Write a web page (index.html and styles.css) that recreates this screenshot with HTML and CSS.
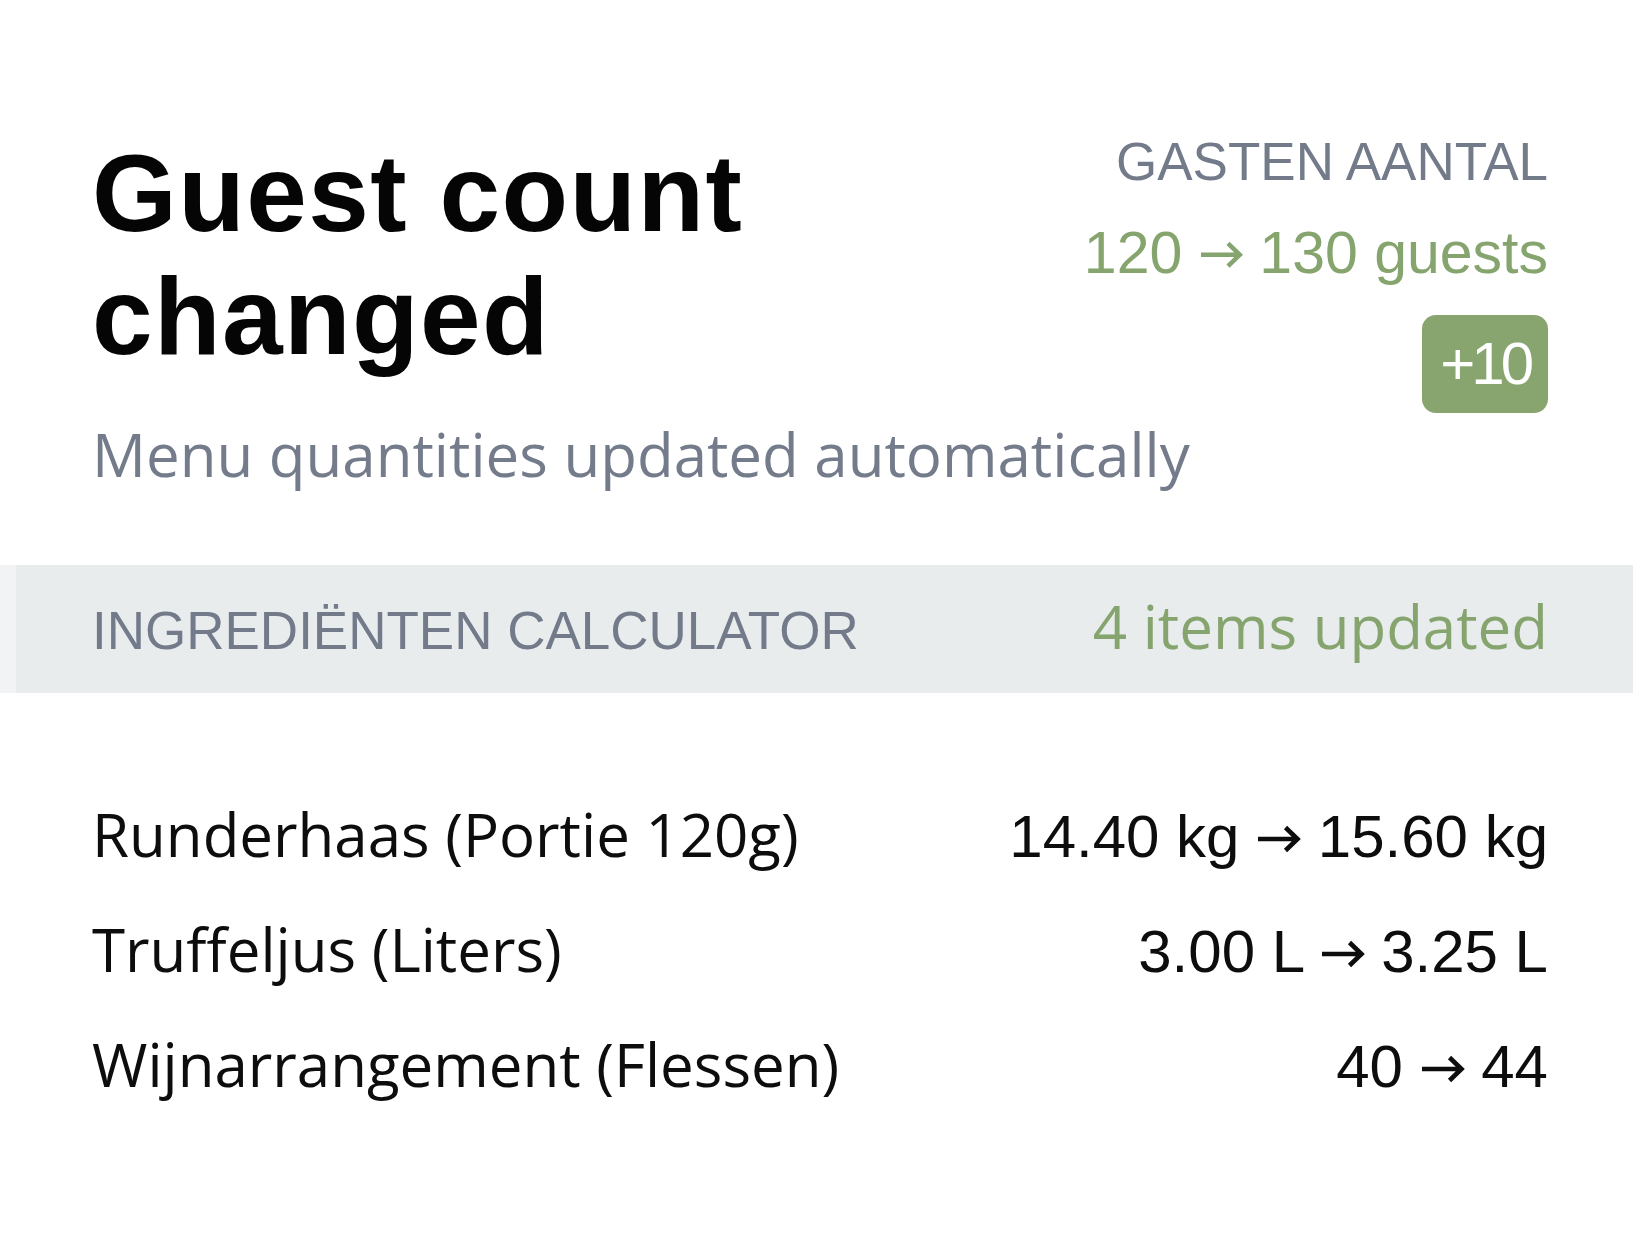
FILE: index.html
```html
<!DOCTYPE html>
<html lang="nl">
<head>
<meta charset="utf-8">
<title>Guest count changed</title>
<link rel="stylesheet" href="styles.css">
</head>
<body>
<div class="page">
  <header class="hero">
    <h1 class="title">Guest count changed</h1>
    <div class="stat">
      <div class="stat-label">GASTEN AANTAL</div>
      <div class="stat-value">120 <svg class="arrow" viewBox="0 0 45 28" aria-label="→"><path d="M2 14H42M29.5 2.5L41.5 14L29.5 25.5"/></svg> 130 guests</div>
      <span class="badge">+10</span>
    </div>
  </header>
  <p class="subtitle">Menu quantities updated automatically</p>
  <div class="band">
    <span class="band-title">INGREDIËNTEN CALCULATOR</span>
    <span class="band-meta">4 items updated</span>
  </div>
  <ul class="items">
    <li class="item"><span class="item-name">Runderhaas (Portie 120g)</span><span class="item-qty">14.40 kg <svg class="arrow" viewBox="0 0 45 28" aria-label="→"><path d="M2 14H42M29.5 2.5L41.5 14L29.5 25.5"/></svg> 15.60 kg</span></li>
    <li class="item"><span class="item-name">Truffeljus (Liters)</span><span class="item-qty">3.00 L <svg class="arrow" viewBox="0 0 45 28" aria-label="→"><path d="M2 14H42M29.5 2.5L41.5 14L29.5 25.5"/></svg> 3.25 L</span></li>
    <li class="item"><span class="item-name">Wijnarrangement (Flessen)</span><span class="item-qty">40 <svg class="arrow" viewBox="0 0 45 28" aria-label="→"><path d="M2 14H42M29.5 2.5L41.5 14L29.5 25.5"/></svg> 44</span></li>
  </ul>
</div>
</body>
</html>
```

FILE: styles.css
```css
html, body {
  margin: 0;
  padding: 0;
  background: #ffffff;
}

.page {
  padding: 132px 102px 0 92px;
}

.hero {
  display: flex;
  justify-content: space-between;
  align-items: flex-start;
  gap: 40px;
}

.title {
  margin: 0;
  flex: 1;
  font-family: "Liberation Sans", Arial, sans-serif;
  font-weight: 700;
  font-size: 109px;
  line-height: 123px;
  letter-spacing: 1.4px;
  color: #050505;
}

.stat {
  display: flex;
  flex-direction: column;
  align-items: flex-end;
}

.stat-label {
  font-family: "Liberation Sans", Arial, sans-serif;
  font-size: 53px;
  line-height: 60px;
  color: #737b8b;
}

.stat-value {
  margin-top: 28px;
  font-family: "Liberation Sans", Arial, sans-serif;
  font-size: 59px;
  line-height: 66px;
  color: #86a46e;
  white-space: nowrap;
}

.arrow {
  width: 0.75em;
  height: 0.467em;
  vertical-align: 0.07em;
  fill: none;
  stroke: currentColor;
  stroke-width: 4.6;
  stroke-linejoin: miter;
  stroke-linecap: butt;
}

.badge {
  display: block;
  margin-top: 29px;
  padding: 16px 18px;
  border-radius: 14px;
  background: #88a56f;
  color: #ffffff;
  font-family: "Liberation Sans", Arial, sans-serif;
  font-size: 60px;
  line-height: 66px;
  letter-spacing: -4px;
}

.subtitle {
  margin: 5px 0 0;
  font-family: "Open Sans", sans-serif;
  font-size: 60px;
  line-height: 72px;
  color: #747c8c;
}

.band {
  margin: 75px -85px 0 -92px;
  padding: 25px 85px 26px 92px;
  display: flex;
  justify-content: space-between;
  align-items: baseline;
  background: linear-gradient(to right, #f1f3f4 0, #f1f3f4 16px, #e8eced 16px);
}

.band-title {
  font-family: "Liberation Sans", Arial, sans-serif;
  font-size: 53px;
  line-height: 72px;
  color: #737b8b;
}

.band-meta {
  font-family: "Open Sans", sans-serif;
  font-size: 60px;
  line-height: 72px;
  color: #86a46e;
}

.items {
  list-style: none;
  margin: 105px 0 0;
  padding: 0;
  display: flex;
  flex-direction: column;
  gap: 40px;
}

.item {
  display: flex;
  justify-content: space-between;
  align-items: baseline;
}

.item-name {
  font-family: "Open Sans", sans-serif;
  font-size: 60px;
  line-height: 72px;
  color: #0d0d0d;
}

.item-qty {
  font-family: "Liberation Sans", Arial, sans-serif;
  font-size: 60px;
  line-height: 72px;
  color: #0d0d0d;
  white-space: nowrap;
}
```
